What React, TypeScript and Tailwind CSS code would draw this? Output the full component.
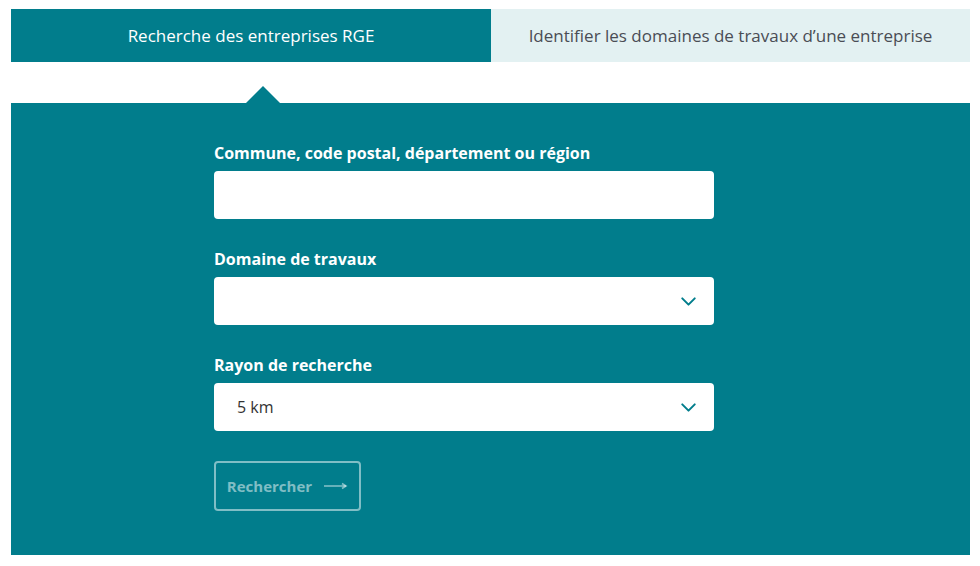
import { ChevronDown } from "lucide-react";

function Field({ label, children }: { label: string; children: React.ReactNode }) {
  return (
    <div className="flex flex-col">
      <label className="mb-[8px] text-[16px] font-bold leading-[20px] text-white">{label}</label>
      {children}
    </div>
  );
}

function Select({ value }: { value?: string }) {
  return (
    <div className="flex h-[48px] items-center justify-between rounded-[4px] bg-white pl-[23px] pr-[13px]">
      <span className="text-[16px] text-[#333]">{value}</span>
      <ChevronDown className="h-[25px] w-[25px] text-[#017d8c]" strokeWidth={1.9} />
    </div>
  );
}

export default function App() {
  return (
    <div className="min-h-[566px] bg-white pt-[9px] font-['Open_Sans',sans-serif]">
      <div className="mx-[11px] w-[959px]">
        <div className="flex h-[53px]">
          <div className="flex w-[480px] items-center justify-center bg-[#017d8c] text-[17px] text-white">
            Recherche des entreprises RGE
          </div>
          <div className="flex flex-1 items-center justify-center bg-[#e3f1f2] text-[17px] text-[#4a4d55]">
            Identifier les domaines de travaux d’une entreprise
          </div>
        </div>
        <div className="relative mt-[41px] h-[452px] bg-[#017d8c]">
          <div className="absolute left-[235px] top-[-17px] h-0 w-0 border-x-[17px] border-b-[17px] border-x-transparent border-b-[#017d8c]" />
          <div className="ml-[203px] flex w-[500px] flex-col gap-[30px] pt-[40px]">
            <Field label="Commune, code postal, département ou région">
              <input className="h-[48px] rounded-[4px] bg-white px-[23px] outline-none" />
            </Field>
            <Field label="Domaine de travaux">
              <Select />
            </Field>
            <Field label="Rayon de recherche">
              <Select value="5 km" />
            </Field>
            <div>
              <button className="flex h-[50px] w-[147px] items-center justify-center gap-[12px] rounded-[4px] border-2 border-white/50 text-[15px] font-bold text-white/50">
                Rechercher
                <svg width="24" height="8" viewBox="0 0 24 8" fill="none">
                  <path d="M0 4h22" stroke="currentColor" strokeWidth="1.6" />
                  <path d="M18 1.5l4 2.5-4 2.5" stroke="currentColor" strokeWidth="1.6" fill="none" />
                </svg>
              </button>
            </div>
          </div>
        </div>
      </div>
    </div>
  );
}
